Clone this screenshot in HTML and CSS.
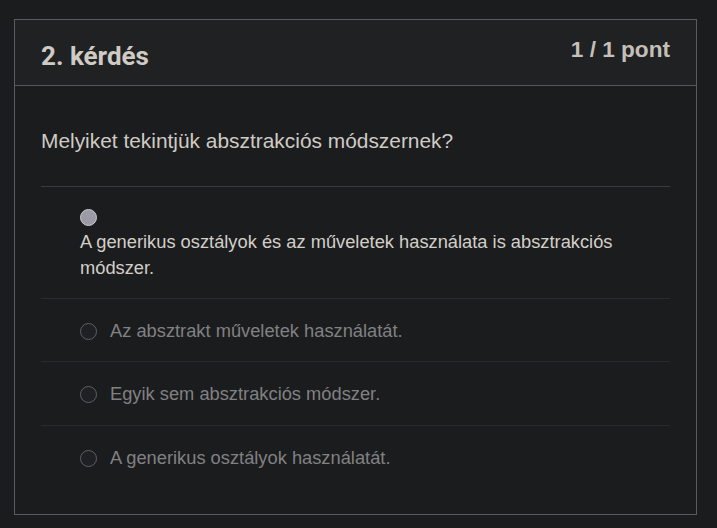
FILE: index.html
```html
<!DOCTYPE html>
<html lang="hu">
<head>
<meta charset="utf-8">
<title>2. kérdés</title>
<link rel="stylesheet" href="styles.css">
</head>
<body>
<div class="card">
  <div class="card-header">
    <h2 class="title">2. kérdés</h2>
    <div class="points">1 / 1 pont</div>
  </div>
  <div class="card-body">
    <p class="question">Melyiket tekintjük absztrakciós módszernek?</p>
    <ul class="options">
      <li class="option selected">
        <span class="radio checked"></span>
        <span class="label">A generikus osztályok és az műveletek használata is absztrakciós módszer.</span>
      </li>
      <li class="option">
        <span class="radio"></span>
        <span class="label">Az absztrakt műveletek használatát.</span>
      </li>
      <li class="option">
        <span class="radio"></span>
        <span class="label">Egyik sem absztrakciós módszer.</span>
      </li>
      <li class="option">
        <span class="radio"></span>
        <span class="label">A generikus osztályok használatát.</span>
      </li>
    </ul>
  </div>
</div>
</body>
</html>
```
FILE: styles.css
```css
* { box-sizing: border-box; }
html, body { background: #1b1c1e; }
body {
  margin: 0;
  padding: 19px 0 0 14px;
  font-family: "Liberation Sans", Arial, sans-serif;
  color: #cfcbc4;
}
.card {
  width: 683px;
  height: 496px;
  border: 1px solid #5a5b5e;
  background: #1b1c1e;
  display: flex;
  flex-direction: column;
}
.card-header {
  height: 66px;
  flex: none;
  background: #202123;
  border-bottom: 1px solid #55565a;
  display: flex;
  justify-content: space-between;
  align-items: flex-start;
  padding: 0 26px;
}
.title {
  margin: 21px 0 0;
  font-family: Roboto, "Liberation Sans", sans-serif;
  font-weight: 700;
  font-size: 26px;
  line-height: 30px;
  color: #cfcbc4;
}
.points {
  margin-top: 17px;
  font-weight: 700;
  font-size: 22.6px;
  line-height: 25px;
  color: #c4c0b9;
}
.card-body {
  padding: 0 26px;
}
.question {
  margin: 0;
  padding: 43px 0 33px;
  font-size: 20.9px;
  line-height: 24px;
  border-bottom: 1px solid #3a3b3e;
}
.options {
  list-style: none;
  margin: 0;
  padding: 0;
}
.option {
  display: flex;
  align-items: center;
  gap: 13px;
  padding: 19px 39px 17px;
  font-size: 18.3px;
  line-height: 26px;
  color: #818182;
  border-bottom: 1px solid #2a2b2e;
}
.option:nth-child(3) { padding-bottom: 18px; }
.option:last-child { border-bottom: none; }
.option.selected {
  flex-direction: column;
  align-items: flex-start;
  gap: 3px;
  padding: 22px 39px 17px;
  color: #d3cfc8;
}
.radio {
  flex: none;
  width: 17px;
  height: 17px;
  border-radius: 50%;
  border: 1.5px solid #5e6067;
  background: #1f2023;
}
.radio.checked {
  border: 1.5px solid #c9c9d1;
  background: #9b9aa6;
}
```
